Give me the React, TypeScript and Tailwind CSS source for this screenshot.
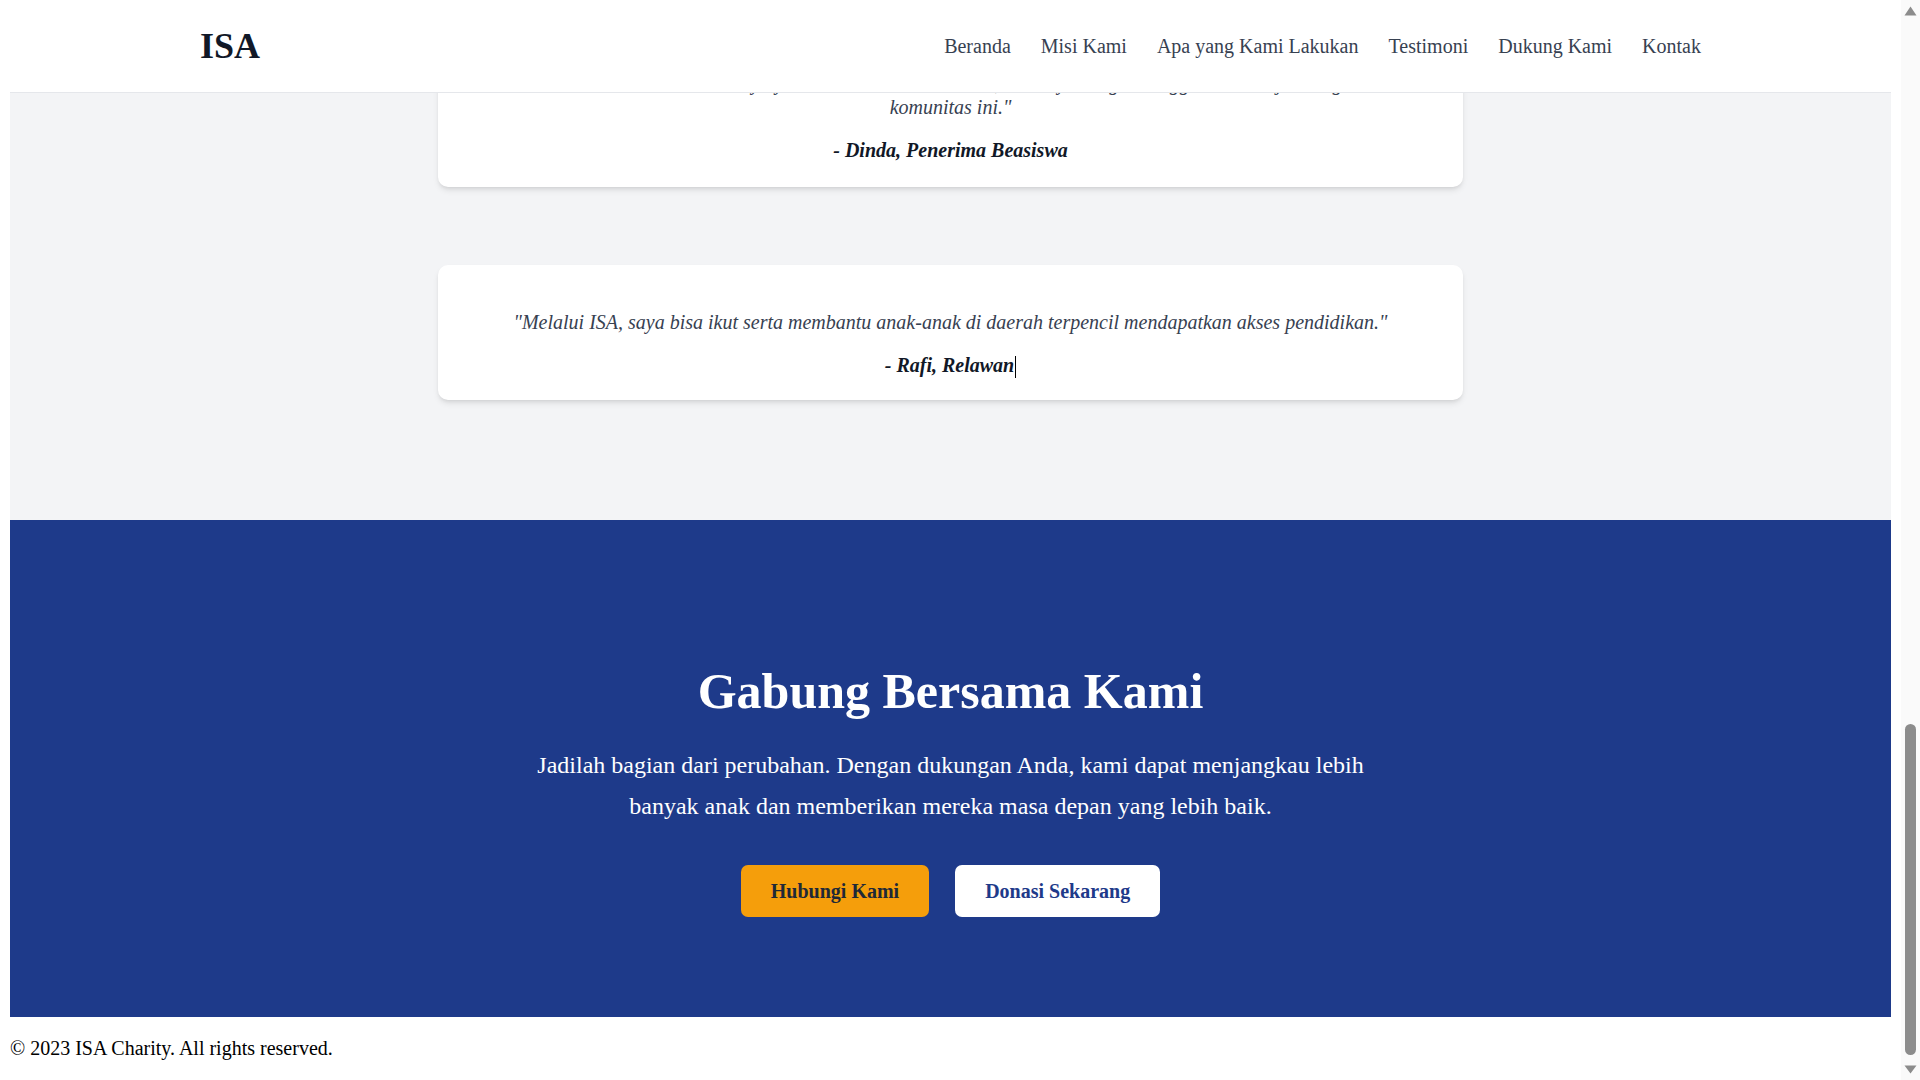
import React from "react";

const navItems = ["Beranda", "Misi Kami", "Apa yang Kami Lakukan", "Testimoni", "Dukung Kami", "Kontak"];

function Scrollbar() {
  return (
    <div className="w-[19px] h-full bg-[#fafafa] flex flex-col items-center pt-[6px] pb-[6px]">
      <svg width="13" height="10" viewBox="0 0 13 10" className="block">
        <path d="M6.5 0.5 L12.5 9.5 L0.5 9.5 Z" fill="#8c8c8c" />
      </svg>
      <div className="flex-1" />
      <div className="w-[11px] h-[331px] rounded-full bg-[#8c8c8c]" />
      <div className="h-[10px]" />
      <svg width="13" height="9" viewBox="0 0 13 9" className="block">
        <path d="M0.5 0.5 L12.5 0.5 L6.5 8.5 Z" fill="#8c8c8c" />
      </svg>
    </div>
  );
}

export default function App() {
  return (
    <div
      className="w-[1920px] h-[1080px] flex overflow-hidden bg-white"
      style={{ fontFamily: '"Liberation Serif", "Times New Roman", serif' }}
    >
      <div className="w-[1901px] h-full overflow-hidden flex flex-col px-[10px]">
        {/* Header */}
        <header className="relative z-10 h-[93px] shrink-0 bg-white border-b border-[#e5e7eb] flex items-center justify-between pl-[190px] pr-[190px]">
          <div className="text-[36px] font-bold text-[#111827] leading-none">ISA</div>
          <nav className="flex items-center gap-[30px] text-[20px] text-[#374151]">
            {navItems.map((n) => (
              <span key={n}>{n}</span>
            ))}
          </nav>
        </header>

        {/* Testimonials */}
        <section className="bg-[#f3f4f6] flex flex-col items-center pb-[120px] shrink-0">
          <div className="-mt-[64px] w-[1025px] bg-white rounded-[10px] shadow-md pt-[42px] pb-[22px] px-[30px] text-center">
            <p className="text-[20px] leading-[24px] italic text-[#374151]">
              "Beasiswa dari ISA membuat saya yakin bisa terus bersekolah, dan saya sangat bangga bisa menjadi bagian dari
              <br />
              komunitas ini."
            </p>
            <p className="mt-[16px] text-[20px] leading-[30px] italic font-bold text-[#111827]">- Dinda, Penerima Beasiswa</p>
          </div>
          <div className="mt-[78px] w-[1025px] bg-white rounded-[10px] shadow-md pt-[42px] pb-[20px] px-[30px] text-center">
            <p className="text-[20px] leading-[30px] italic text-[#374151]">
              "Melalui ISA, saya bisa ikut serta membantu anak-anak di daerah terpencil mendapatkan akses pendidikan."
            </p>
            <p className="mt-[13px] text-[20px] leading-[30px] italic font-bold text-[#111827]">
              - Rafi, Relawan
              <span className="inline-block align-middle w-px h-[22px] bg-black ml-px" />
            </p>
          </div>
        </section>

        {/* CTA */}
        <section className="bg-[#1e3a8a] shrink-0 flex flex-col items-center pt-[141px] pb-[100px] text-white">
          <h2 className="text-[50px] leading-[60px] font-bold">Gabung Bersama Kami</h2>
          <p className="mt-[24px] max-w-[840px] text-center text-[24px] leading-[41px]">
            Jadilah bagian dari perubahan. Dengan dukungan Anda, kami dapat menjangkau lebih banyak anak dan memberikan mereka masa depan yang lebih baik.
          </p>
          <div className="mt-[38px] flex gap-[26px]">
            <button className="h-[52px] px-[30px] rounded-[7px] bg-[#f59e0b] text-[20px] font-bold text-[#1f2937]">
              Hubungi Kami
            </button>
            <button className="h-[52px] px-[30px] rounded-[7px] bg-white text-[20px] font-bold text-[#1e3a8a]">
              Donasi Sekarang
            </button>
          </div>
        </section>

        {/* Footer */}
        <footer className="pt-[16px] text-[20px] leading-[30px] text-black">© 2023 ISA Charity. All rights reserved.</footer>
      </div>
      <Scrollbar />
    </div>
  );
}
